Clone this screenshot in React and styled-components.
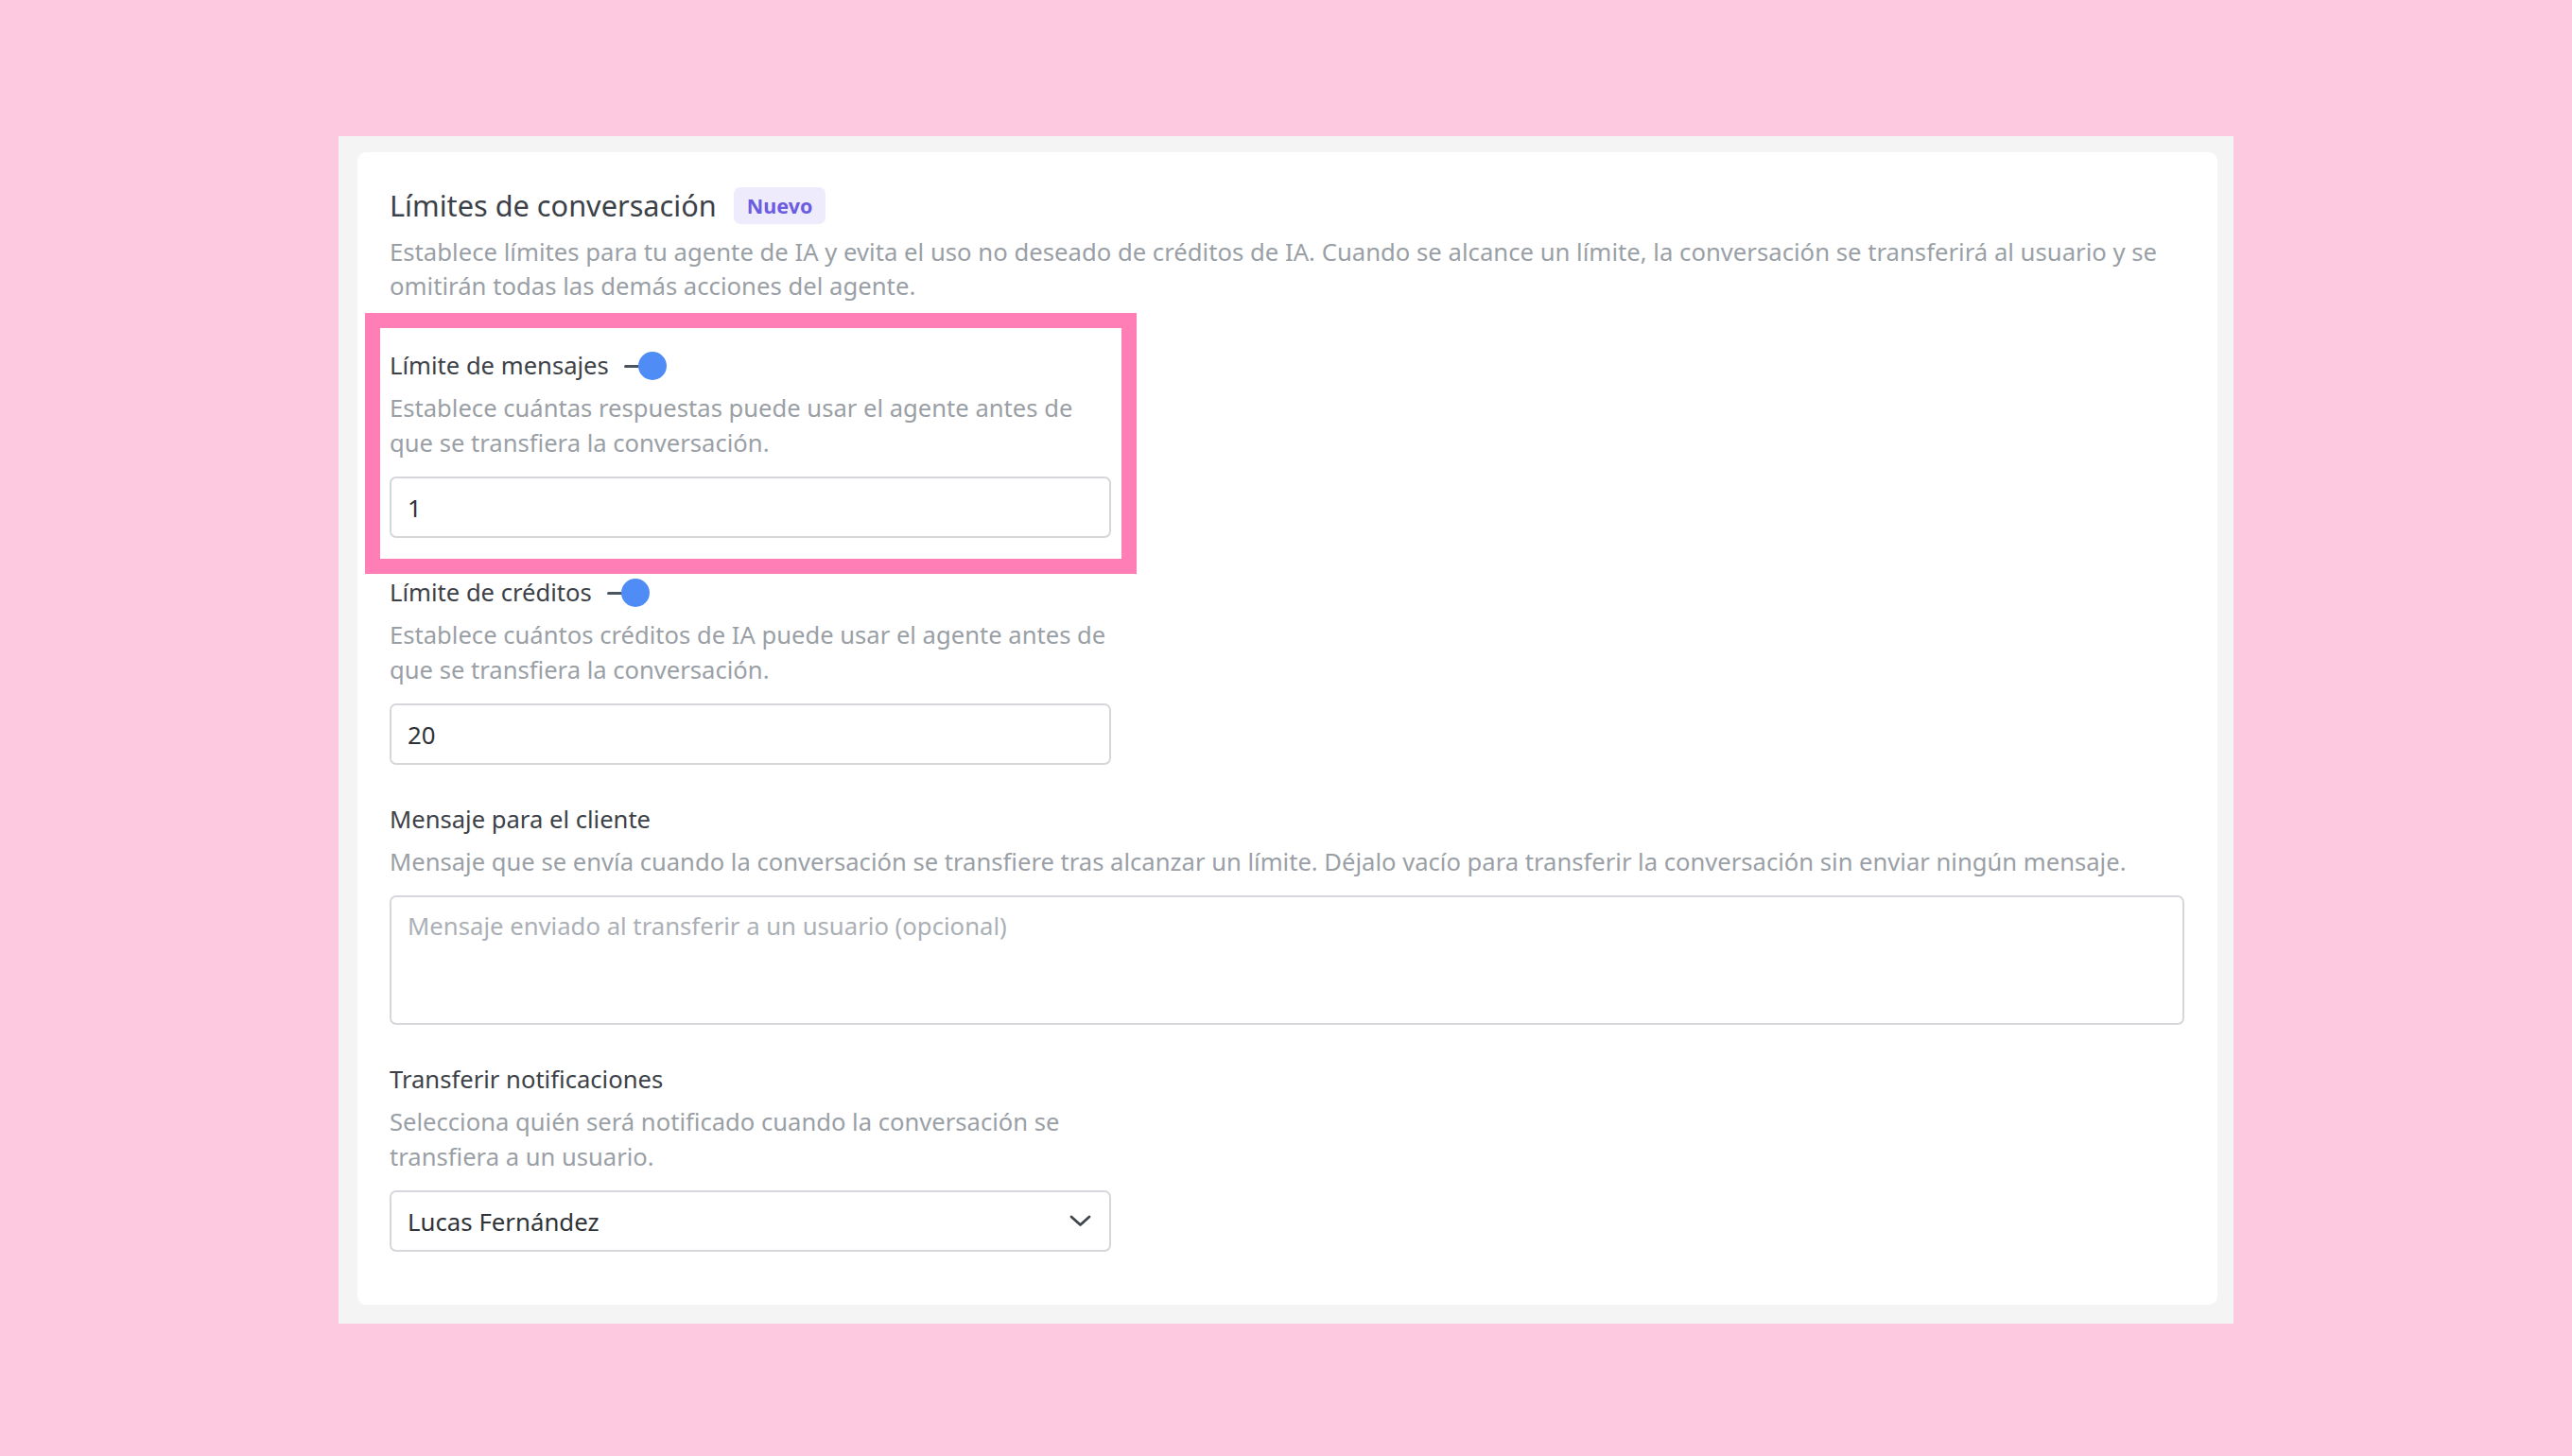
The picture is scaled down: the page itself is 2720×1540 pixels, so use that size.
import React from 'react';
import styled, { createGlobalStyle } from 'styled-components';

const GlobalStyle = createGlobalStyle`
  html, body {
    margin: 0;
    padding: 0;
    background: #fdc9e0;
  }
  body {
    font-family: "Noto Sans", "Open Sans", "Liberation Sans", sans-serif;
  }
  *, *::before, *::after {
    box-sizing: border-box;
  }
`;

const Page = styled.div`
  min-height: 100vh;
  display: flex;
  justify-content: center;
  align-items: flex-start;
  padding-top: 144px;
`;

const Panel = styled.div`
  width: 2004px;
  background: #f4f4f4;
  padding: 17px 17px 20px 20px;
`;

const Card = styled.section`
  background: #ffffff;
  border-radius: 9px;
  padding: 34px 35px 56px 34px;
`;

const Header = styled.div`
  display: flex;
  align-items: center;
  gap: 18px;
`;

const Title = styled.h2`
  margin: 0;
  font-size: 30.7px;
  line-height: 44px;
  font-weight: 400;
  color: #3c4148;
`;

const Badge = styled.span`
  display: inline-flex;
  align-items: center;
  height: 39px;
  padding: 0 14px;
  border-radius: 7px;
  background: #eeebfd;
  color: #6b5ce0;
  font-size: 21.5px;
  font-weight: 700;
`;

const Lead = styled.p`
  margin: 10px 0 0;
  font-size: 25.7px;
  line-height: 36px;
  color: #9a9fa6;
`;

const Fields = styled.div`
  display: flex;
  flex-direction: column;
  gap: 40px;
  margin-top: 48px;
`;

const Field = styled.div`
  position: relative;
  width: ${p => (p.$wide ? '100%' : '763px')};
`;

/* pink frame drawn around the first setting */
const Highlight = styled.div`
  position: absolute;
  top: -38px;
  left: -26px;
  right: -27px;
  bottom: -38px;
  border: 16px solid #ff7eb6;
  pointer-events: none;
`;

const LabelRow = styled.div`
  display: flex;
  align-items: center;
  gap: 16px;
  height: 36px;
`;

const Label = styled.label`
  font-size: 25.6px;
  line-height: 36px;
  color: #3c4148;
`;

const Toggle = styled.span`
  display: inline-flex;
  align-items: center;
`;

const Track = styled.span`
  width: 18px;
  height: 3px;
  border-radius: 2px;
  background: #4b5560;
`;

const Knob = styled.span`
  width: 30px;
  height: 30px;
  margin-left: -3px;
  border-radius: 50%;
  background: #4f8cf6;
`;

const Hint = styled.p`
  margin: 8px 0 0;
  font-size: 25.6px;
  line-height: 37px;
  color: #9a9fa6;
`;

const SelectBox = styled.div`
  margin-top: 17px;
  width: 100%;
  height: 65px;
  border: 2px solid #d5d7da;
  border-radius: 7px;
  background: #fff;
  padding: 0 19px 0 17px;
  display: flex;
  align-items: center;
  justify-content: space-between;
  font-size: 25.8px;
  color: #2f3337;
`;

const TextInput = styled.input`
  margin-top: 17px;
  width: 100%;
  height: 65px;
  border: 2px solid #d5d7da;
  border-radius: 7px;
  background: #fff;
  padding: 0 17px;
  font-family: inherit;
  font-size: 25.8px;
  color: #2f3337;
  outline: none;
`;

const TextArea = styled.textarea`
  display: block;
  margin-top: 17px;
  width: 100%;
  height: 137px;
  border: 2px solid #d5d7da;
  border-radius: 7px;
  background: #fff;
  padding: 13px 17px;
  font-family: inherit;
  font-size: 25.7px;
  line-height: 36px;
  color: #2f3337;
  resize: none;
  outline: none;
  &::placeholder {
    color: #abb0b6;
  }
`;

const Chevron = () => (
  <svg width="23" height="13" viewBox="0 0 23 13" fill="none">
    <path d="M2 2l9.5 8.5L21 2" stroke="#3f454c" strokeWidth="2.8" strokeLinecap="round" strokeLinejoin="round" />
  </svg>
);

const Switch = () => (
  <Toggle>
    <Track />
    <Knob />
  </Toggle>
);

export default function App() {
  return (
    <>
      <GlobalStyle />
      <Page>
        <Panel>
          <Card>
            <Header>
              <Title>Límites de conversación</Title>
              <Badge>Nuevo</Badge>
            </Header>
            <Lead>
              Establece límites para tu agente de IA y evita el uso no deseado de créditos de IA. Cuando se alcance un límite, la conversación se transferirá al usuario y se omitirán todas las demás acciones del agente.
            </Lead>
            <Fields>
              <Field>
                <LabelRow>
                  <Label>Límite de mensajes</Label>
                  <Switch />
                </LabelRow>
                <Hint>Establece cuántas respuestas puede usar el agente antes de que se transfiera la conversación.</Hint>
                <TextInput defaultValue="1" />
                <Highlight />
              </Field>
              <Field>
                <LabelRow>
                  <Label>Límite de créditos</Label>
                  <Switch />
                </LabelRow>
                <Hint>Establece cuántos créditos de IA puede usar el agente antes de que se transfiera la conversación.</Hint>
                <TextInput defaultValue="20" />
              </Field>
              <Field $wide>
                <LabelRow>
                  <Label>Mensaje para el cliente</Label>
                </LabelRow>
                <Hint>Mensaje que se envía cuando la conversación se transfiere tras alcanzar un límite. Déjalo vacío para transferir la conversación sin enviar ningún mensaje.</Hint>
                <TextArea placeholder="Mensaje enviado al transferir a un usuario (opcional)" />
              </Field>
              <Field>
                <LabelRow>
                  <Label>Transferir notificaciones</Label>
                </LabelRow>
                <Hint>Selecciona quién será notificado cuando la conversación se transfiera a un usuario.</Hint>
                <SelectBox>
                  <span>Lucas Fernández</span>
                  <Chevron />
                </SelectBox>
              </Field>
            </Fields>
          </Card>
        </Panel>
      </Page>
    </>
  );
}
